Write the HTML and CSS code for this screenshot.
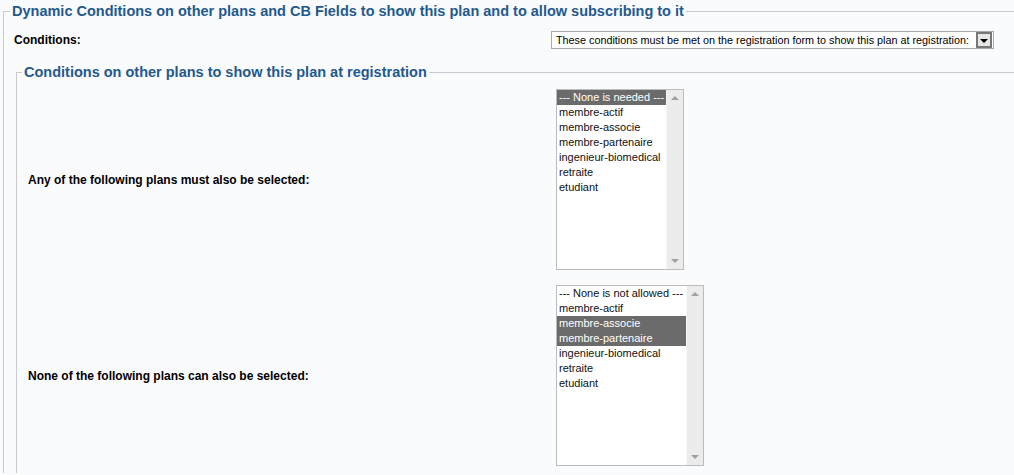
FILE: index.html
```html
<html>

<head>
	<title>Plan conditions</title>
	<link rel="stylesheet" href="styles.css">
</head>
<body>
	<fieldset class="outer">
		<legend>Dynamic Conditions on other plans and CB Fields to show this plan and to allow subscribing to it</legend>
		<table class="params">
			<tr>
				<td class="label">Conditions:</td>
				<td>
					<div class="dropdown">
						<span>These conditions must be met on the registration form to show this plan at registration:</span>
						<span class="drop-btn"><i></i></span>
					</div>
				</td>
			</tr>
		</table>
		<fieldset class="inner">
			<legend>Conditions on other plans to show this plan at registration</legend>
			<table class="params plans">
				<tr>
					<td class="label">Any of the following plans must also be selected:</td>
					<td>
						<div class="listbox list-any">
							<ul>
								<li class="sel">--- None is needed ---</li>
								<li>membre-actif</li>
								<li>membre-associe</li>
								<li>membre-partenaire</li>
								<li>ingenieur-biomedical</li>
								<li>retraite</li>
								<li>etudiant</li>
							</ul>
							<div class="scroll"><i class="up"></i><i class="down"></i></div>
						</div>
					</td>
				</tr>
				<tr>
					<td class="label">None of the following plans can also be selected:</td>
					<td>
						<div class="listbox list-none">
							<ul>
								<li>--- None is not allowed ---</li>
								<li>membre-actif</li>
								<li class="sel">membre-associe</li>
								<li class="sel">membre-partenaire</li>
								<li>ingenieur-biomedical</li>
								<li>retraite</li>
								<li>etudiant</li>
							</ul>
							<div class="scroll"><i class="up"></i><i class="down"></i></div>
						</div>
					</td>
				</tr>
			</table>
		</fieldset>
	</fieldset>
</body>

</html>
```

FILE: styles.css
```css
body { margin: 0; background: #fafbfd; font-family: "Liberation Sans", Arial, sans-serif; color: #000; }
fieldset { border: 1px solid #cacaca; border-right: none; border-bottom: none; margin: 0; }
legend { color: #23598c; font-weight: bold; font-size: 14.5px; line-height: 17px; padding: 0 2px; margin-left: -2px; }
.outer { margin: 3px 0 0 3px; padding: 0 0 0 8px; }
.inner { margin: 7px 0 0 4px; padding: 0 0 0 7px; }
.params { border-collapse: collapse; width: 100%; }
.params td { padding: 11px 2px 8px 2px; vertical-align: middle; }
.params td.label { font-size: 12px; font-weight: bold; width: 533px; }
.plans td { padding: 8px 1px 7px 4px; }
.plans td.label { width: 523px; }
.dropdown { display: flex; align-items: center; justify-content: space-between; width: 436px; height: 16px; border: 1px solid #a9a9a9; background: #fff; font-size: 10.8px; padding: 0 1px 0 4px; white-space: nowrap; }
.dropdown span { flex-shrink: 0; }
.drop-btn { width: 12px; height: 12px; border: 2px solid #777; background: #e6e6e6; display: flex; align-items: center; justify-content: center; }
.drop-btn i { border-left: 4px solid transparent; border-right: 4px solid transparent; border-top: 4px solid #000; margin-top: 2px; }
.listbox { display: flex; border: 1px solid #bcbcbc; background: #fff; height: 179px; }
.list-any { width: 126px; }
.list-none { width: 146px; }
.listbox ul { list-style: none; margin: 0; padding: 0; flex: 1; font-size: 11px; }
.listbox li { line-height: 15px; padding-left: 2px; color: #111; white-space: nowrap; }
.listbox li.sel { background: #6b6b6b; color: #fff; }
.scroll { width: 16px; background: #ececec; border-left: 1px solid #f6f6f6; display: flex; flex-direction: column; justify-content: space-between; align-items: center; padding: 6px 0; }
.scroll i { border-left: 4px solid transparent; border-right: 4px solid transparent; }
.scroll .up { border-bottom: 4px solid #a0a0a0; }
.scroll .down { border-top: 4px solid #a0a0a0; }
```
